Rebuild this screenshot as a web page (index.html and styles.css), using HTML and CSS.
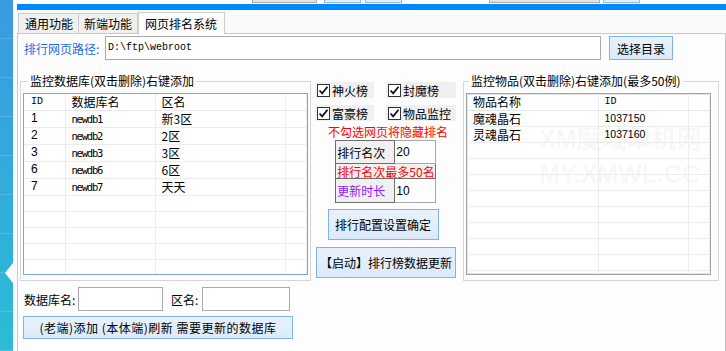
FILE: index.html
```html
<!DOCTYPE html>
<html lang="zh-CN">
<head>
    <meta charset="UTF-8">
    <meta name="viewport" content="width=device-width, initial-scale=1.0">
    <title>网页排名系统</title>
    <link rel="stylesheet" href="styles.css">
</head>
<body>
<div class="window">
    <!-- left side strip -->
    <div class="side"><span class="notch"></span></div>
    <div class="gutter"></div>

    <div class="main">
        <div class="topline">
            <span class="edge grey e1"></span>
            <span class="edge blue e2"></span>
            <span class="edge blue e3"></span>
            <span class="edge grey e4"></span>
            <span class="edge blue e5"></span>
        </div>
        <div class="bluebar"></div>

        <!-- Tabs -->
        <div class="tabs">
            <div class="tab t1">通用功能</div>
            <div class="tab t2">新端功能</div>
            <div class="tab t3 active">网页排名系统</div>
        </div>

        <div class="panel">
            <div class="path-row">
                <span class="path-label">排行网页路径:</span>
                <div class="textbox path-box">D:\ftp\webroot</div>
                <button class="btn pick-btn">选择目录</button>
            </div>

            <div class="content">
                <!-- Database list -->
                <fieldset class="group db-group">
                    <legend>监控数据库(双击删除)右键添加</legend>
                    <div class="list db-list">
                        <table>
                            <colgroup><col style="width:41px"><col style="width:90px"><col style="width:130px"><col></colgroup>
                            <tr class="head"><th class="mono">ID</th><th>数据库名</th><th>区名</th><th></th></tr>
                            <tr><td class="num">1</td><td class="mono">newdb1</td><td>新3区</td><td></td></tr>
                            <tr><td class="num">2</td><td class="mono">newdb2</td><td>2区</td><td></td></tr>
                            <tr><td class="num">3</td><td class="mono">newdb3</td><td>3区</td><td></td></tr>
                            <tr><td class="num">6</td><td class="mono">newdb6</td><td>6区</td><td></td></tr>
                            <tr><td class="num">7</td><td class="mono">newdb7</td><td>天天</td><td></td></tr>
                            <tr><td></td><td></td><td></td><td></td></tr>
                            <tr><td></td><td></td><td></td><td></td></tr>
                            <tr><td></td><td></td><td></td><td></td></tr>
                            <tr><td></td><td></td><td></td><td></td></tr>
                            <tr><td></td><td></td><td></td><td></td></tr>
                            <tr><td></td><td></td><td></td><td></td></tr>
                        </table>
                    </div>
                </fieldset>

                <!-- Middle settings -->
                <div class="mid">
                    <div class="chk-row">
                        <span class="chk w60"><span class="box"><svg width="11" height="11" viewBox="0 0 11 11"><path d="M1.5 5.5 L4.2 8.3 L9.5 1.8" fill="none" stroke="#111" stroke-width="1.8"/></svg></span>神火榜</span>
                        <span class="chk w71"><span class="box"><svg width="11" height="11" viewBox="0 0 11 11"><path d="M1.5 5.5 L4.2 8.3 L9.5 1.8" fill="none" stroke="#111" stroke-width="1.8"/></svg></span>封魔榜</span>
                    </div>
                    <div class="chk-row second">
                        <span class="chk w60"><span class="box"><svg width="11" height="11" viewBox="0 0 11 11"><path d="M1.5 5.5 L4.2 8.3 L9.5 1.8" fill="none" stroke="#111" stroke-width="1.8"/></svg></span>富豪榜</span>
                        <span class="chk w71"><span class="box"><svg width="11" height="11" viewBox="0 0 11 11"><path d="M1.5 5.5 L4.2 8.3 L9.5 1.8" fill="none" stroke="#111" stroke-width="1.8"/></svg></span>物品监控</span>
                    </div>
                    <p class="note">不勾选网页将隐藏排名</p>
                    <table class="cfg">
                        <tr class="r1"><td class="key">排行名次</td><td class="val">20</td></tr>
                        <tr class="r2"><td class="key warn" colspan="2">排行名次最多50名</td></tr>
                        <tr class="r3"><td class="key purple">更新时长</td><td class="val">10</td></tr>
                    </table>
                    <button class="btn cfg-btn">排行配置设置确定</button>
                    <button class="btn start-btn">【启动】排行榜数据更新</button>
                </div>

                <!-- Item list -->
                <fieldset class="group item-group">
                    <legend>监控物品(双击删除)右键添加(最多50例)</legend>
                    <div class="list item-list">
                        <div class="wm wm1">XM魔域单机网</div>
                        <div class="wm wm2">MY.XMWL.CC</div>
                        <table>
                            <colgroup><col style="width:131px"><col style="width:90px"><col></colgroup>
                            <tr class="head"><th>物品名称</th><th class="mono">ID</th><th></th></tr>
                            <tr><td>魔魂晶石</td><td class="digits">1037150</td><td></td></tr>
                            <tr><td>灵魂晶石</td><td class="digits">1037160</td><td></td></tr>
                            <tr><td></td><td></td><td></td></tr>
                            <tr><td></td><td></td><td></td></tr>
                            <tr><td></td><td></td><td></td></tr>
                            <tr><td></td><td></td><td></td></tr>
                            <tr><td></td><td></td><td></td></tr>
                            <tr><td></td><td></td><td></td></tr>
                            <tr><td></td><td></td><td></td></tr>
                            <tr><td></td><td></td><td></td></tr>
                            <tr><td></td><td></td><td></td></tr>
                        </table>
                    </div>
                </fieldset>
            </div>

            <!-- Add database -->
            <div class="db-form">
                <span class="form-label">数据库名:</span>
                <div class="textbox name-box"></div>
                <span class="form-label zone-label">区名:</span>
                <div class="textbox zone-box"></div>
            </div>
            <button class="btn update-btn">(老端)添加 (本体端)刷新  需要更新的数据库</button>
        </div>
    </div>
</div>
</body>
</html>
```

FILE: styles.css
```css
/* General */
* {
    box-sizing: border-box;
}
body {
    margin: 0;
    font-family: "Noto Sans CJK SC", "Noto Sans", sans-serif;
    font-size: 12px;
    color: #000;
    background: #fff;
}
.window {
    display: flex;
    width: 726px;
    height: 351px;
    overflow: hidden;
}

/* Side strip */
.side {
    position: relative;
    width: 13px;
    background:
        repeating-linear-gradient(to bottom, transparent 0 38px, rgba(255, 255, 255, 0.15) 38px 39px),
        linear-gradient(#3a9ae0, #2bbcd5);
}
.notch {
    position: absolute;
    left: 5px;
    top: 263px;
    border-style: solid;
    border-width: 10px 8px 10px 0;
    border-color: transparent #fff transparent transparent;
}
.gutter {
    width: 4px;
    background: #fbfbfb;
}
.main {
    width: 709px;
    display: flex;
    flex-direction: column;
}

/* Top edge of cropped toolbar */
.topline {
    height: 4px;
    display: flex;
    align-items: flex-start;
}
.edge {
    height: 3px;
    border: 1px solid;
    border-top: 0;
}
.edge.grey {
    background: #e4e4e4;
    border-color: #ababab;
}
.edge.blue {
    background: #e3f0fc;
    border-color: #8cbcec;
}
.e1 { width: 65px; margin-left: 235px; }
.e2 { width: 37px; margin-left: 7px; }
.e3 { width: 37px; margin-left: 4px; }
.e4 { width: 111px; margin-left: 87px; }
.e5 { width: 37px; margin-left: 3px; }

.bluebar {
    height: 6px;
    background: #0088ff;
}

/* Tabs */
.tabs {
    height: 23px;
    display: flex;
    align-items: flex-end;
    padding-left: 1px;
    background: #f9f9f9;
}
.tab {
    height: 20px;
    padding-left: 6px;
    line-height: 19px;
    border: 1px solid #cdcdcd;
    border-bottom: 0;
    background: #f0f0f0;
}
.t1 { width: 61px; }
.t2 { width: 59px; border-left: 0; padding-left: 5px; }
.t3 { width: 87px; }
.tab.active {
    position: relative;
    z-index: 1;
    height: 22px;
    margin-bottom: -1px;
    line-height: 21px;
    background: #fdfdfd;
}

/* Panel */
.panel {
    flex: 1;
    border: 1px solid #c8c8c8;
    border-bottom: 0;
    background: #fdfdfd;
}
.path-row {
    display: flex;
    align-items: center;
    height: 24px;
    margin: 2px 0 0 6px;
}
.path-label {
    width: 81px;
    color: #1c6ee8;
}
.textbox {
    height: 24px;
    border: 1px solid #aaa;
    background: #fff;
}
.path-box {
    width: 496px;
    padding-left: 2px;
    font-family: "Liberation Mono", monospace;
    font-size: 10px;
    line-height: 21px;
}

/* Buttons */
.btn {
    margin: 0;
    padding: 0;
    font-family: inherit;
    font-size: 12px;
    color: #000;
    border: 1px solid #7eb4ea;
    background: linear-gradient(#e8f2fc, #dbeafb);
}
.pick-btn {
    width: 64px;
    height: 24px;
    margin-left: 8px;
}

/* Main content row */
.content {
    display: flex;
    align-items: flex-start;
    margin-top: 13px;
}
.group {
    margin: 0;
    min-width: 0;
    height: 208px;
    padding: 4px 2px 5px 2px;
    border: 1px solid #d5d5d5;
    box-shadow: inset 1px 1px 0 #fff;
}
.group legend {
    padding: 0 2px;
    line-height: 16px;
}
.db-group {
    width: 291px;
    margin-left: 2px;
}
.db-group legend {
    margin-left: 5px;
}
.item-group {
    width: 256px;
    margin-left: 7px;
}
.item-group legend {
    margin-left: 3px;
}

/* List views */
.list {
    position: relative;
    height: 182px;
    overflow: hidden;
    background: #fff;
}
.db-list {
    border: 1px solid #78a6dd;
}
.item-list {
    width: 245px;
    border: 1px solid #a4a4a4;
    box-shadow: inset 0 0 0 1px #e2e2e2;
}
.list table {
    position: relative;
    width: 100%;
    border-collapse: collapse;
    table-layout: fixed;
}
.list th,
.list td {
    height: 16px;
    padding: 0 0 0 6px;
    border-right: 1px solid #ececec;
    border-bottom: 1px solid #ececec;
    font-weight: normal;
    text-align: left;
    white-space: nowrap;
    overflow: hidden;
    line-height: 15px;
}
.list .head th {
    border-bottom-color: #e3e8ef;
}
.db-list .num {
    padding-left: 7px;
    font-family: "Liberation Sans", sans-serif;
}
.db-list th.mono {
    padding-left: 7px;
    font-family: "Liberation Mono", monospace;
    font-size: 10px;
}
.db-list td.mono {
    padding-top: 1px;
    font-family: "DejaVu Sans Mono", monospace;
    font-size: 10.5px;
    letter-spacing: -1.2px;
}
.item-list th.mono {
    font-family: "Liberation Mono", monospace;
    font-size: 10px;
}
.digits {
    font-family: "Liberation Sans", sans-serif;
    font-size: 10.5px;
}
.wm {
    position: absolute;
    left: 72px;
    font-family: "Liberation Sans", "Noto Sans CJK SC", sans-serif;
    font-size: 25px;
    font-weight: bold;
    line-height: 25px;
    color: rgba(0, 0, 0, 0.045);
}
.wm1 { top: 33px; }
.wm2 { top: 68px; }

/* Middle column */
.mid {
    width: 141px;
    margin-left: 4px;
    padding-top: 9px;
    display: flex;
    flex-direction: column;
    align-items: center;
}
.chk-row {
    display: flex;
    width: 100%;
    gap: 12px;
}
.chk-row.second {
    margin-top: 7px;
}
.chk {
    display: flex;
    align-items: center;
    height: 16px;
    padding-left: 2px;
    background: #f0f0f0;
}
.w60 { width: 60px; }
.w71 { width: 71px; }
.box {
    display: flex;
    align-items: center;
    justify-content: center;
    width: 13px;
    height: 13px;
    margin-right: 2px;
    border: 1px solid #333;
    background: #fff;
}
.note {
    margin: 4px 0 0 5px;
    line-height: 14px;
    color: #ff0000;
}
.cfg {
    margin-top: 1px;
    border-collapse: collapse;
    width: 100px;
}
.cfg td {
    padding: 0 0 0 1px;
    white-space: nowrap;
}
.cfg .r1 td { height: 23px; }
.cfg .r2 td { height: 15px; line-height: 13px; }
.cfg .r3 td { height: 24px; }
.cfg .key {
    width: 59px;
    border: 1px solid #6e6e6e;
    background: #f0f0f0;
}
.cfg .val {
    border: 1px solid #a9a9a9;
    background: #fff;
    font-family: "Liberation Sans", sans-serif;
}
.cfg .warn {
    color: #ff0000;
}
.cfg .purple {
    color: #8a1bff;
}
.cfg-btn {
    width: 111px;
    height: 31px;
    margin: 6px 0 0 -5px;
}
.start-btn {
    width: 140px;
    height: 31px;
    margin: 7px 0 0 1px;
}

/* Bottom form */
.db-form {
    display: flex;
    align-items: center;
    height: 24px;
    margin: 6px 0 0 6px;
}
.form-label {
    width: 54px;
}
.name-box {
    width: 85px;
}
.zone-label {
    width: 31px;
    margin-left: 8px;
}
.zone-box {
    width: 88px;
}
.update-btn {
    display: block;
    width: 270px;
    height: 23px;
    margin: 5px 0 0 5px;
    letter-spacing: 0.5px;
}
```
